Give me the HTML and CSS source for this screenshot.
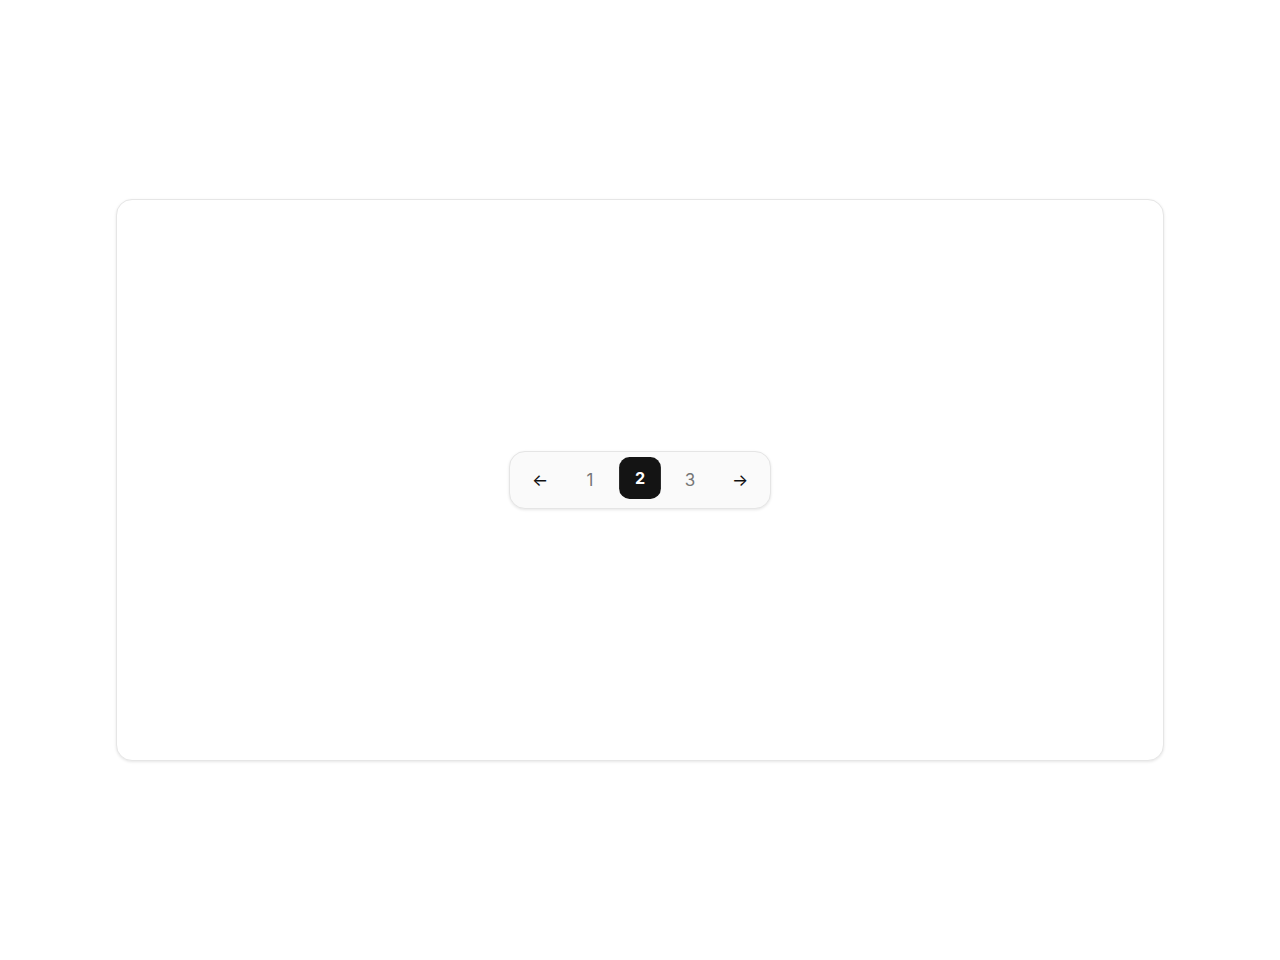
FILE: index.html
```html
<!DOCTYPE html>
<html lang="en">
<head>
<meta charset="utf-8">
<title>Pagination</title>
<link rel="stylesheet" href="styles.css">
</head>
<body>
<main class="stage">
  <section class="card">
    <nav class="pager" aria-label="Pagination">
      <button class="pager-btn pager-arrow" aria-label="Previous page">←</button>
      <button class="pager-btn">1</button>
      <button class="pager-btn is-active" aria-current="page">2</button>
      <button class="pager-btn">3</button>
      <button class="pager-btn pager-arrow" aria-label="Next page">→</button>
    </nav>
  </section>
</main>
</body>
</html>
```

FILE: styles.css
```css
* { box-sizing: border-box; }
html, body { margin: 0; padding: 0; background: #ffffff; }
body {
  font-family: Inter, "Noto Sans", "Liberation Sans", sans-serif;
  width: 1280px;
  height: 960px;
}
.stage {
  height: 960px;
  display: flex;
  align-items: center;
  justify-content: center;
}
.card {
  width: 1048px;
  height: 562px;
  background: #ffffff;
  border: 1px solid #e6e6e6;
  border-radius: 16px;
  box-shadow: 0 1px 3px rgba(0,0,0,0.10);
  display: flex;
  align-items: center;
  justify-content: center;
}
.pager {
  display: flex;
  align-items: center;
  gap: 6px;
  padding: 6px 8px;
  background: #fafafa;
  border: 1px solid #e5e5e5;
  border-radius: 16px;
  box-shadow: 0 1px 3px rgba(0,0,0,0.10);
}
.pager-btn {
  width: 44px;
  height: 44px;
  border: 0;
  background: transparent;
  border-radius: 11px;
  font-family: inherit;
  font-size: 17px;
  color: #767676;
  display: flex;
  align-items: center;
  justify-content: center;
  padding: 0;
  cursor: pointer;
}
.pager-arrow {
  color: #111111;
  font-size: 17px;
}
.is-active {
  background: #141414;
  color: #ffffff;
  font-weight: 700;
  transform: translateY(-2px) scale(0.95);
}
```
